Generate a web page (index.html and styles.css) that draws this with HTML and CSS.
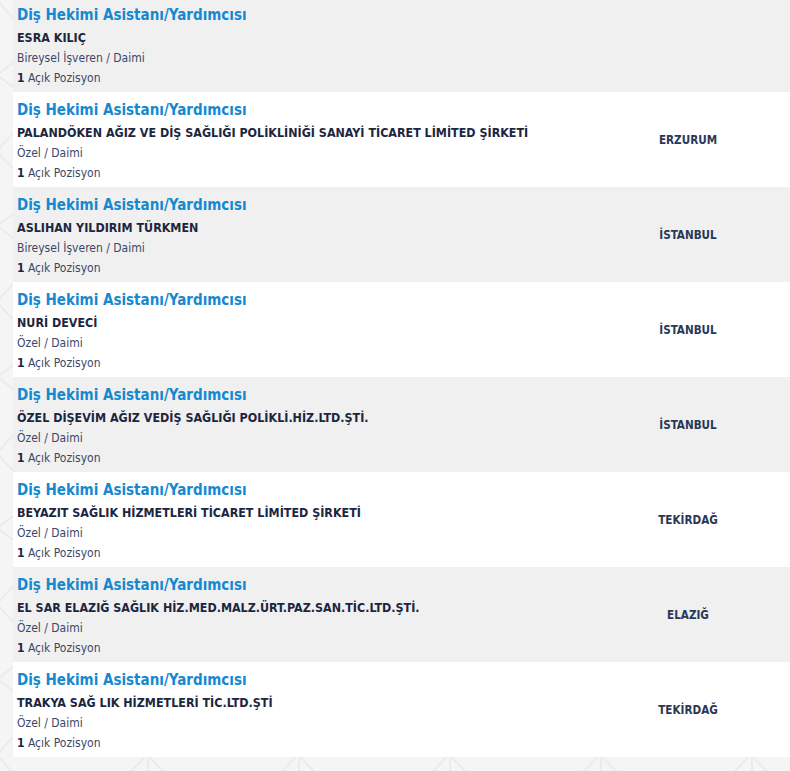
FILE: index.html
```html
<!DOCTYPE html>
<html lang="tr">
<head>
<meta charset="UTF-8">
<meta name="viewport" content="width=device-width, initial-scale=1.0">
<title>İş İlanları</title>
<link rel="stylesheet" href="styles.css">
</head>
<body>

<div class="list">
    <div class="job">
        <div class="info">
            <a class="title" href="#">Diş Hekimi Asistanı/Yardımcısı</a>
            <div class="company">ESRA KILIÇ</div>
            <div class="meta">Bireysel İşveren / Daimi</div>
            <div class="meta"><b>1</b> Açık Pozisyon</div>
        </div>
        <div class="city"></div>
    </div>

    <div class="job">
        <div class="info">
            <a class="title" href="#">Diş Hekimi Asistanı/Yardımcısı</a>
            <div class="company">PALANDÖKEN AĞIZ VE DİŞ SAĞLIĞI POLİKLİNİĞİ SANAYİ TİCARET LİMİTED ŞİRKETİ</div>
            <div class="meta">Özel / Daimi</div>
            <div class="meta"><b>1</b> Açık Pozisyon</div>
        </div>
        <div class="city">ERZURUM</div>
    </div>

    <div class="job">
        <div class="info">
            <a class="title" href="#">Diş Hekimi Asistanı/Yardımcısı</a>
            <div class="company">ASLIHAN YILDIRIM TÜRKMEN</div>
            <div class="meta">Bireysel İşveren / Daimi</div>
            <div class="meta"><b>1</b> Açık Pozisyon</div>
        </div>
        <div class="city">İSTANBUL</div>
    </div>

    <div class="job">
        <div class="info">
            <a class="title" href="#">Diş Hekimi Asistanı/Yardımcısı</a>
            <div class="company">NURİ DEVECİ</div>
            <div class="meta">Özel / Daimi</div>
            <div class="meta"><b>1</b> Açık Pozisyon</div>
        </div>
        <div class="city">İSTANBUL</div>
    </div>

    <div class="job">
        <div class="info">
            <a class="title" href="#">Diş Hekimi Asistanı/Yardımcısı</a>
            <div class="company">ÖZEL DİŞEVİM AĞIZ VEDİŞ SAĞLIĞI POLİKLİ.HİZ.LTD.ŞTİ.</div>
            <div class="meta">Özel / Daimi</div>
            <div class="meta"><b>1</b> Açık Pozisyon</div>
        </div>
        <div class="city">İSTANBUL</div>
    </div>

    <div class="job">
        <div class="info">
            <a class="title" href="#">Diş Hekimi Asistanı/Yardımcısı</a>
            <div class="company">BEYAZIT SAĞLIK HİZMETLERİ TİCARET LİMİTED ŞİRKETİ</div>
            <div class="meta">Özel / Daimi</div>
            <div class="meta"><b>1</b> Açık Pozisyon</div>
        </div>
        <div class="city">TEKİRDAĞ</div>
    </div>

    <div class="job">
        <div class="info">
            <a class="title" href="#">Diş Hekimi Asistanı/Yardımcısı</a>
            <div class="company">EL SAR ELAZIĞ SAĞLIK HİZ.MED.MALZ.ÜRT.PAZ.SAN.TİC.LTD.ŞTİ.</div>
            <div class="meta">Özel / Daimi</div>
            <div class="meta"><b>1</b> Açık Pozisyon</div>
        </div>
        <div class="city">ELAZIĞ</div>
    </div>

    <div class="job">
        <div class="info">
            <a class="title" href="#">Diş Hekimi Asistanı/Yardımcısı</a>
            <div class="company">TRAKYA SAĞ LIK HİZMETLERİ TİC.LTD.ŞTİ</div>
            <div class="meta">Özel / Daimi</div>
            <div class="meta"><b>1</b> Açık Pozisyon</div>
        </div>
        <div class="city">TEKİRDAĞ</div>
    </div>
</div>

</body>
</html>
```
FILE: styles.css
```css
body {
    margin: 0;
    font-family: "DejaVu Sans Condensed", "DejaVu Sans", sans-serif;
    font-size: 12px;
    color: #33405e;
    background-color: #f5f5f5;
    background-image: url("data:image/svg+xml,%3Csvg xmlns='http://www.w3.org/2000/svg' width='151' height='151'%3E%3Cg fill='none' stroke='%23ebebeb' stroke-width='2'%3E%3Cpath d='M1 0V151'/%3E%3Cpath d='M1 151Q75 60 150 151'/%3E%3Cpath d='M1 0Q75 90 150 0'/%3E%3Cpath d='M1 75L75 20L150 75'/%3E%3Cpath d='M1 75L75 130L150 75'/%3E%3C/g%3E%3C/svg%3E");
    background-position: -4px 0;
    overflow: hidden;
}
.list {
    margin: -3px 0 0 13px;
}
.job {
    display: grid;
    grid-template-columns: 1fr 204px;
    align-items: center;
    background: #fff;
}
.job:nth-child(odd) {
    background: #f0f0f0;
}
.info {
    padding: 8px 4px 4px;
}
.title {
    display: block;
    margin-bottom: 3px;
    font-size: 15px;
    font-weight: bold;
    line-height: 20px;
    color: #1588d0;
    text-decoration: none;
}
.company {
    font-size: 12.4px;
    font-weight: bold;
    line-height: 20px;
    color: #1c263f;
}
.meta {
    line-height: 20px;
    color: #3a4868;
}
.meta b {
    color: #1c263f;
}
.city {
    text-align: center;
    font-size: 11.6px;
    font-weight: bold;
    color: #2a3858;
}
```
